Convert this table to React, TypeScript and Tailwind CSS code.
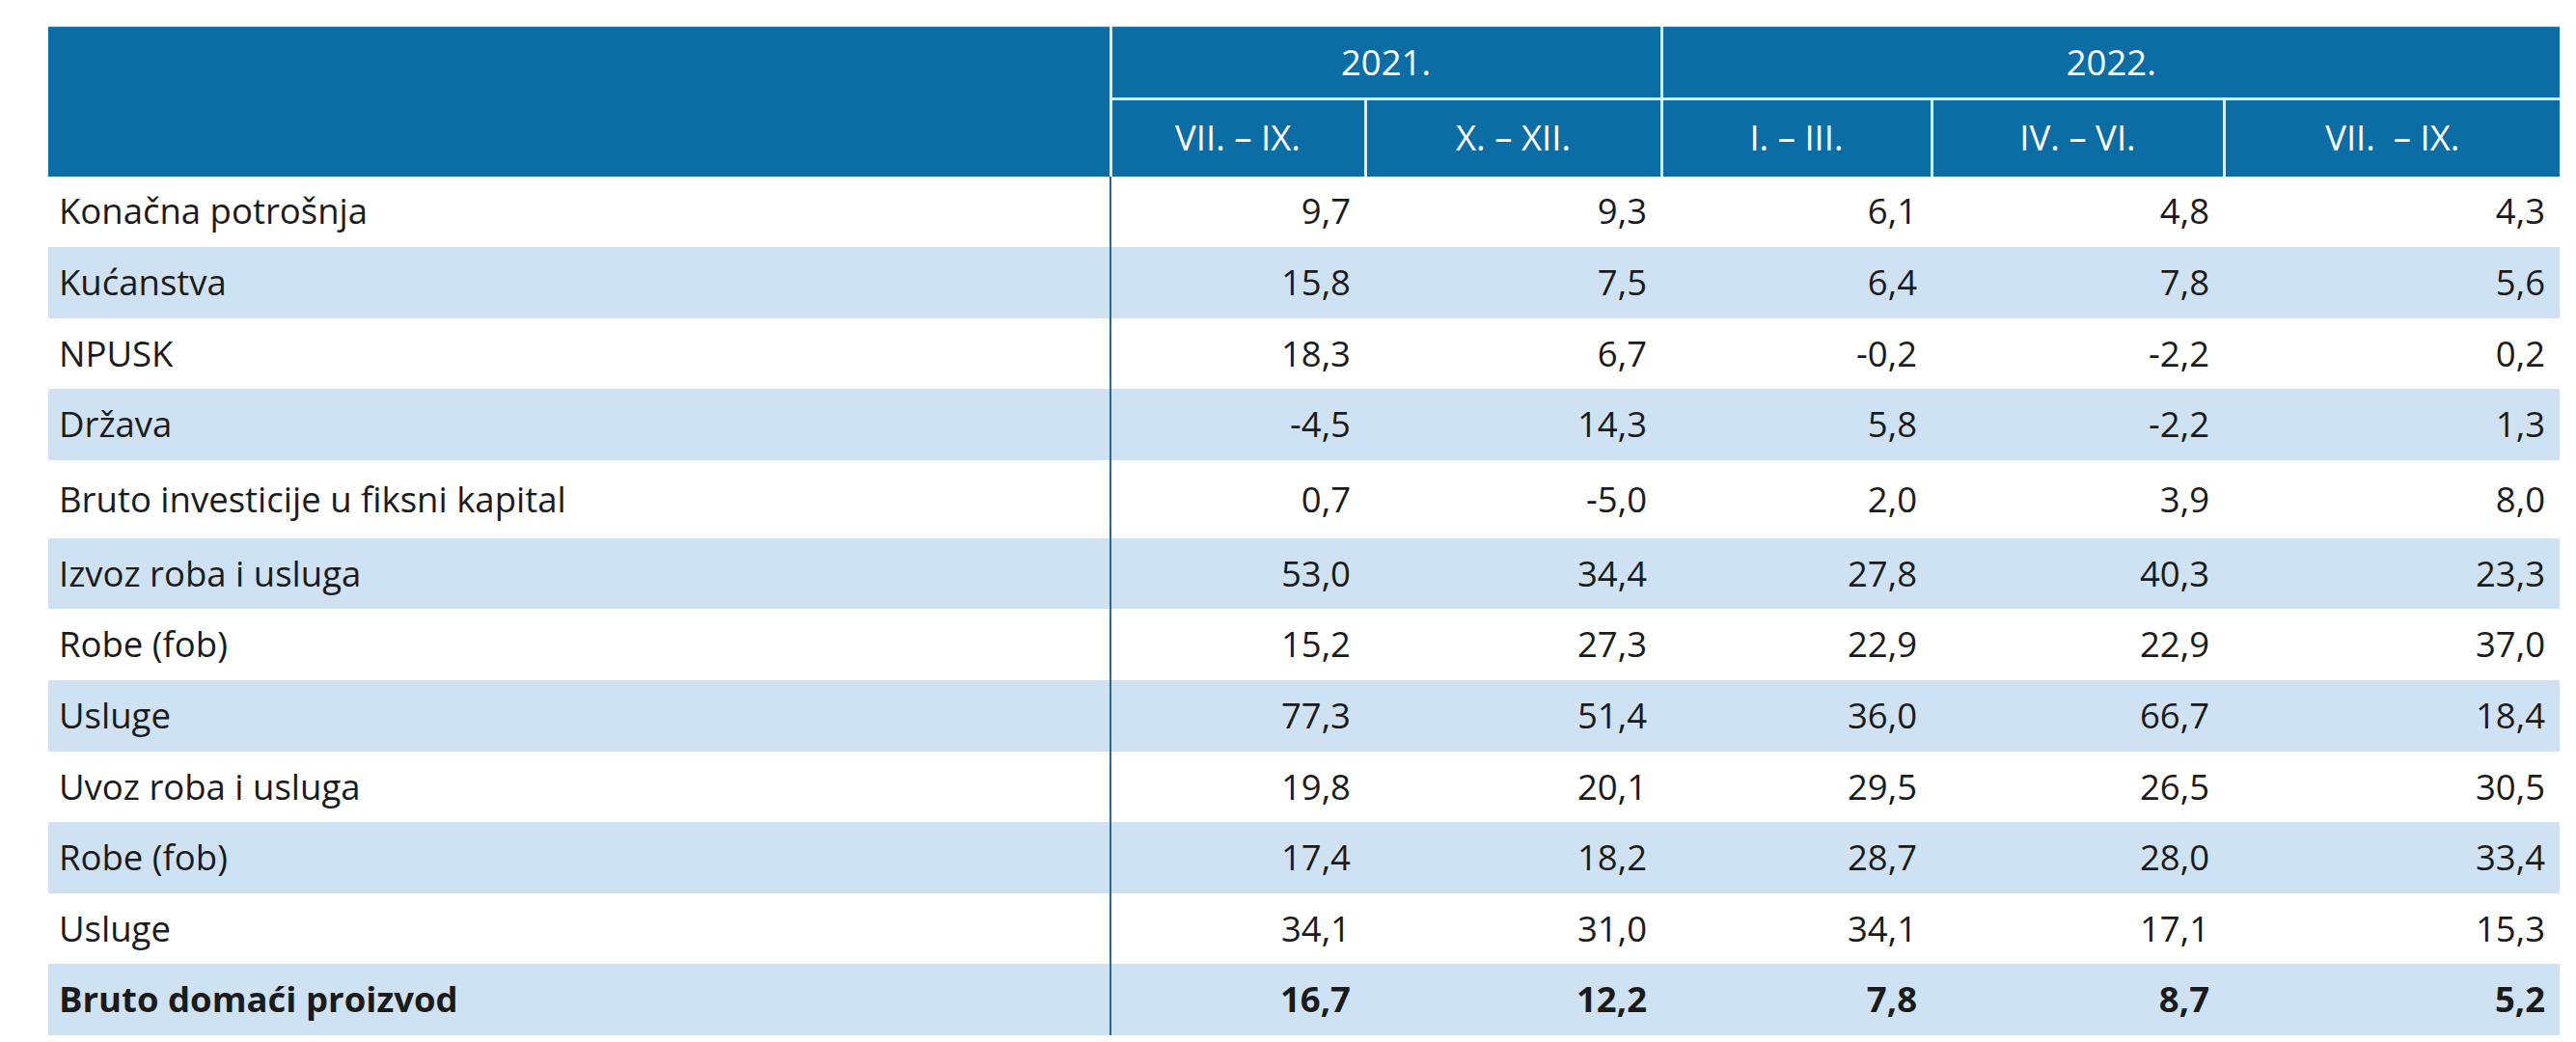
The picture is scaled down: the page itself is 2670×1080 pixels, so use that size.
const rows: { label: string; values: string[]; tall?: boolean; bold?: boolean }[] = [
  { label: 'Konačna potrošnja', values: ['9,7', '9,3', '6,1', '4,8', '4,3'] },
  { label: 'Kućanstva', values: ['15,8', '7,5', '6,4', '7,8', '5,6'] },
  { label: 'NPUSK', values: ['18,3', '6,7', '-0,2', '-2,2', '0,2'] },
  { label: 'Država', values: ['-4,5', '14,3', '5,8', '-2,2', '1,3'] },
  { label: 'Bruto investicije u fiksni kapital', values: ['0,7', '-5,0', '2,0', '3,9', '8,0'], tall: true },
  { label: 'Izvoz roba i usluga', values: ['53,0', '34,4', '27,8', '40,3', '23,3'] },
  { label: 'Robe (fob)', values: ['15,2', '27,3', '22,9', '22,9', '37,0'] },
  { label: 'Usluge', values: ['77,3', '51,4', '36,0', '66,7', '18,4'] },
  { label: 'Uvoz roba i usluga', values: ['19,8', '20,1', '29,5', '26,5', '30,5'] },
  { label: 'Robe (fob)', values: ['17,4', '18,2', '28,7', '28,0', '33,4'] },
  { label: 'Usluge', values: ['34,1', '31,0', '34,1', '17,1', '15,3'] },
  { label: 'Bruto domaći proizvod', values: ['16,7', '12,2', '7,8', '8,7', '5,2'], bold: true },
]

const quarters = ['VII. – IX.', 'X. – XII.', 'I. – III.', 'IV. – VI.', 'VII.  – IX.']

export default function App() {
  return (
    <div className="min-h-screen bg-white pl-[50px] pt-[27px] font-['Open_Sans',sans-serif] text-[36.5px] leading-tight text-[#1b1b1b]">
      <table className="w-[2603px] table-fixed border-collapse">
        <colgroup>
          <col className="w-[1101px]" />
          <col className="w-[264px]" />
          <col className="w-[307px]" />
          <col className="w-[280px]" />
          <col className="w-[303px]" />
          <col className="w-[348px]" />
        </colgroup>
        <thead className="bg-[#0c6ca4] text-white">
          <tr className="h-[75px] border-t border-[#9fd0ea]">
            <th rowSpan={2} className="border-r-[3px] border-[#d6eef8]"></th>
            <th colSpan={2} className="border-r-[3px] border-b-[3px] border-[#d6eef8] font-normal">2021.</th>
            <th colSpan={3} className="border-b-[3px] border-[#d6eef8] font-normal">2022.</th>
          </tr>
          <tr className="h-[80px]">
            {quarters.map((q, i) => (
              <th key={i} className={`font-normal whitespace-pre ${i < 4 ? 'border-r-[3px] border-[#d6eef8]' : ''}`}>{q}</th>
            ))}
          </tr>
        </thead>
        <tbody>
          {rows.map((r, i) => (
            <tr key={i} className={`${r.tall ? 'h-[81px]' : 'h-[73.6px]'} ${i % 2 === 1 ? 'bg-[#cfe2f3]' : 'bg-white'} ${r.bold ? 'font-bold' : ''}`}>
              <td className="border-r-2 border-[#2d6690] pl-[11px]">{r.label}</td>
              {r.values.map((v, j) => (
                <td key={j} className="pr-[15px] text-right">{v}</td>
              ))}
            </tr>
          ))}
        </tbody>
      </table>
    </div>
  )
}
